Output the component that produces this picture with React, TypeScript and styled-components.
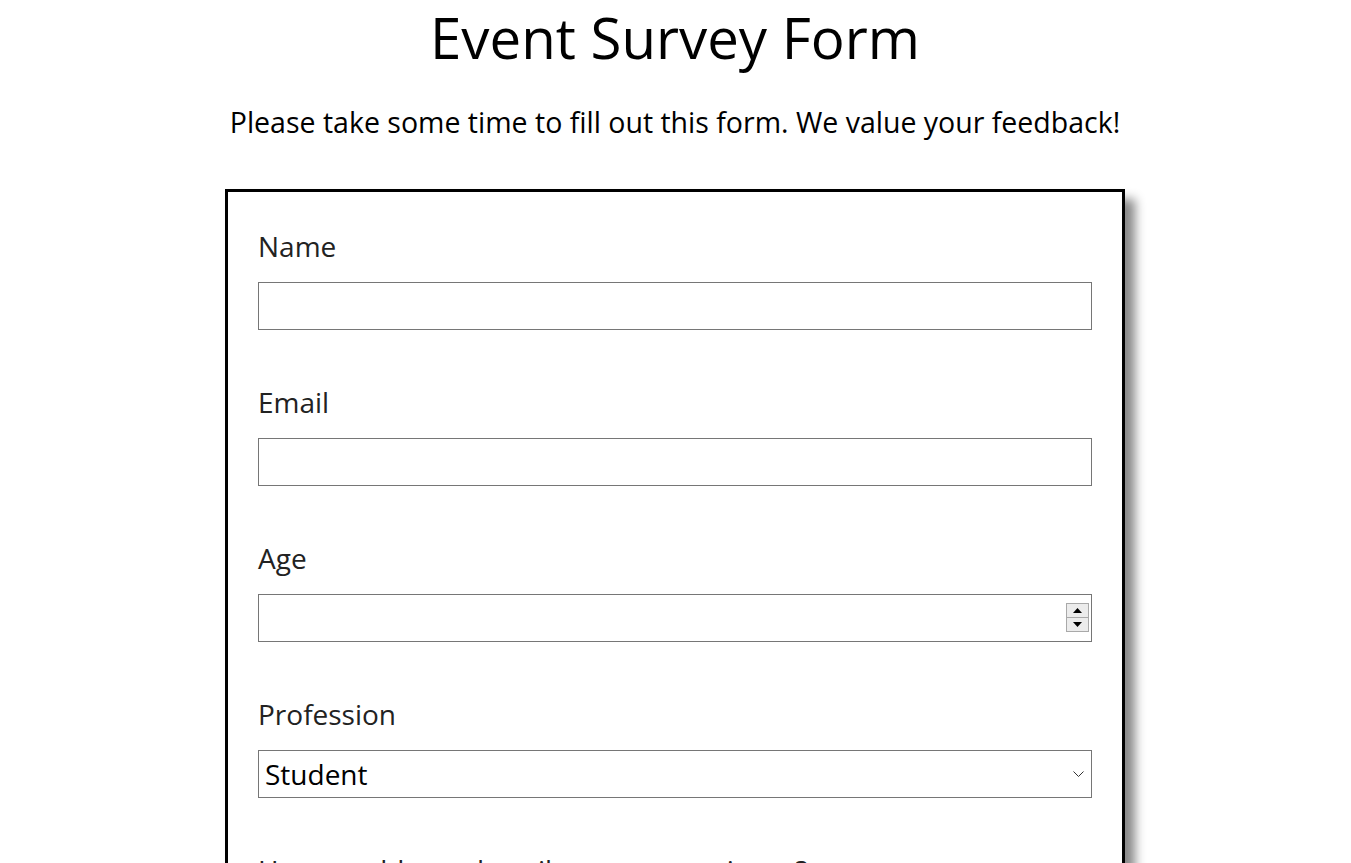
import React from "react";
import styled, { createGlobalStyle } from "styled-components";

const Global = createGlobalStyle`
  html, body { margin: 0; padding: 0; background: #fff; }
  body { font-family: "Open Sans", "Noto Sans", sans-serif; color: #000; }
  * { box-sizing: border-box; }
`;

const Page = styled.div`
  display: flex;
  flex-direction: column;
  align-items: center;
  padding-right: 1px;
`;

const Title = styled.h1`
  margin: 0;
  font-size: 56.4px;
  font-weight: 400;
  line-height: 76px;
`;

const Subtitle = styled.p`
  margin: 27px 0 0;
  font-size: 28.5px;
  line-height: 38px;
`;

const Form = styled.form`
  width: 900px;
  margin-top: 48px;
  border: 3px solid #000;
  padding: 35px 30px 0;
  box-shadow: 10px 10px 10px #888;
  display: flex;
  flex-direction: column;
  gap: 53px;
`;

const Field = styled.div`
  display: flex;
  flex-direction: column;
`;

const Label = styled.label`
  font-size: 28px;
  line-height: 38px;
  color: #222;
  margin-bottom: 17px;
`;

const Input = styled.input`
  width: 100%;
  height: 48px;
  border: 1px solid #767676;
  font-size: 28px;
  font-family: inherit;
  padding: 0 6px;
  outline: none;
  &::-webkit-inner-spin-button { -webkit-appearance: none; }
`;

const Wrap = styled.div`
  position: relative;
`;

const Spinner = styled.div`
  position: absolute;
  right: 3px;
  top: 9px;
  width: 23px;
  height: 29px;
  display: flex;
  flex-direction: column;
`;

const SpinBtn = styled.div`
  flex: 1;
  background: #ececec;
  border: 1px solid #a9a9a9;
  display: flex;
  align-items: center;
  justify-content: center;
  & + & { border-top: none; }
`;

const Select = styled.select`
  width: 100%;
  height: 48px;
  border: 1px solid #767676;
  font-size: 28px;
  font-family: inherit;
  padding: 0 6px;
  background: #fff;
  color: #000;
  appearance: none;
  border-radius: 0;
  outline: none;
`;

const Chevron = styled.svg`
  position: absolute;
  right: 8px;
  top: 21px;
  pointer-events: none;
`;

const Up = () => (
  <svg width="9" height="5" viewBox="0 0 9 5"><path d="M0 5 L4.5 0 L9 5 Z" fill="#000" /></svg>
);
const Down = () => (
  <svg width="9" height="5" viewBox="0 0 9 5"><path d="M0 0 L4.5 5 L9 0 Z" fill="#000" /></svg>
);

export default function App() {
  return (
    <Page>
      <Global />
      <Title>Event Survey Form</Title>
      <Subtitle>Please take some time to fill out this form. We value your feedback!</Subtitle>
      <Form>
        <Field>
          <Label htmlFor="name">Name</Label>
          <Input id="name" type="text" />
        </Field>
        <Field>
          <Label htmlFor="email">Email</Label>
          <Input id="email" type="email" />
        </Field>
        <Field>
          <Label htmlFor="age">Age</Label>
          <Wrap>
            <Input id="age" type="number" />
            <Spinner>
              <SpinBtn><Up /></SpinBtn>
              <SpinBtn><Down /></SpinBtn>
            </Spinner>
          </Wrap>
        </Field>
        <Field>
          <Label htmlFor="prof">Profession</Label>
          <Wrap>
            <Select id="prof" defaultValue="Student">
              <option>Student</option>
              <option>Professional</option>
              <option>Other</option>
            </Select>
            <Chevron width="11" height="6" viewBox="0 0 11 6">
              <path d="M0.5 0.5 L5.5 5.5 L10.5 0.5" stroke="#333" fill="none" strokeWidth="1" />
            </Chevron>
          </Wrap>
        </Field>
        <Field>
          <Label>How would you describe your experience?</Label>
        </Field>
      </Form>
    </Page>
  );
}
